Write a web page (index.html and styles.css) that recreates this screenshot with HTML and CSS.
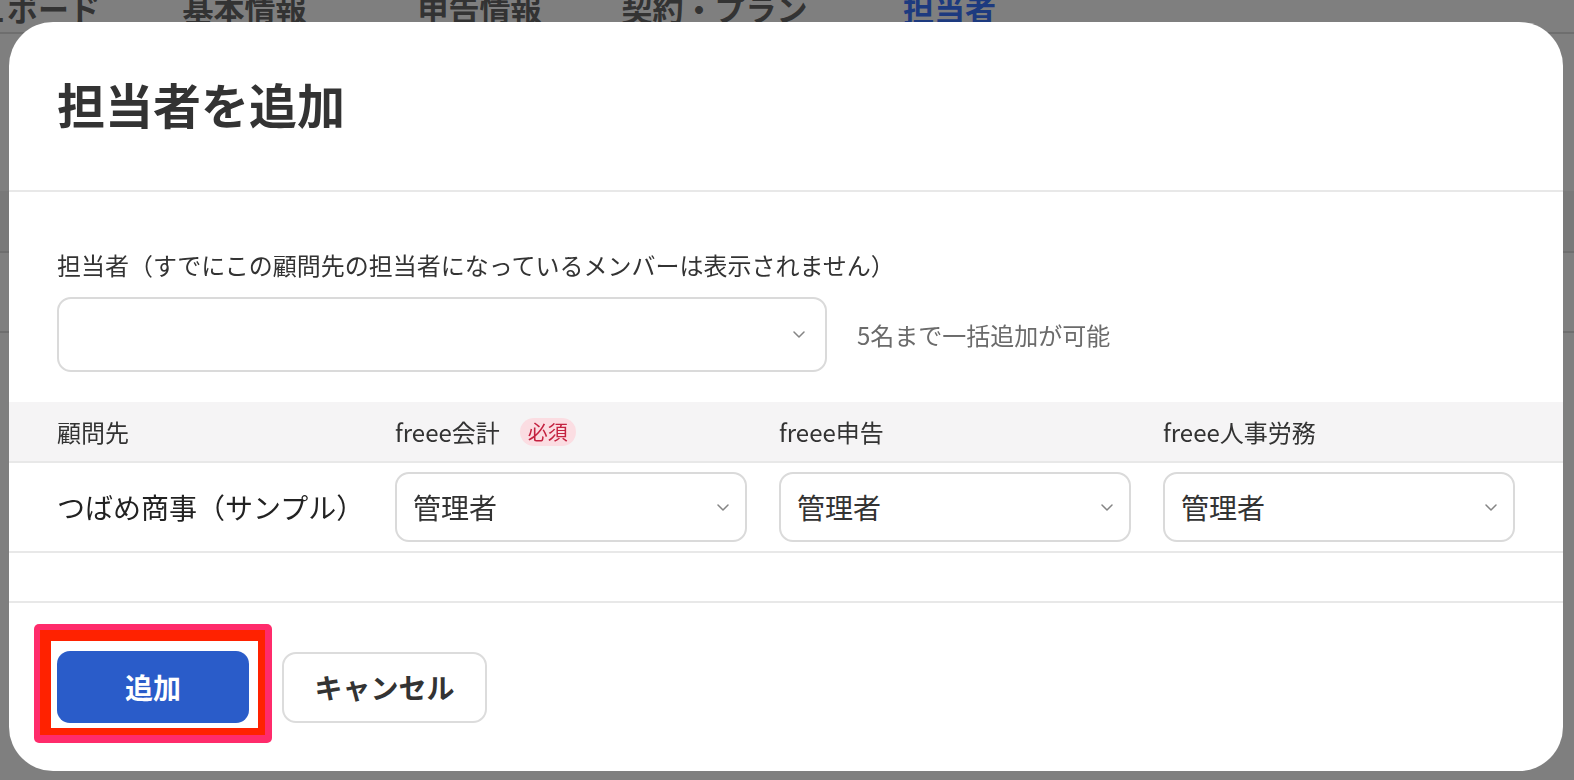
FILE: index.html
```html
<!DOCTYPE html>
<html lang="ja">
<head>
<meta charset="utf-8">
<title>担当者を追加</title>
<link rel="stylesheet" href="styles.css">
</head>
<body>
<div class="page">
  <nav class="tabs">
    <div class="tab-list">
      <div class="tab tab-first"><span>ダッシュボード</span></div>
      <div class="tab">基本情報</div>
      <div class="tab">申告情報</div>
      <div class="tab">契約・プラン</div>
      <div class="tab tab-active">担当者</div>
    </div>
  </nav>
  <div class="band band-a"></div>
  <div class="band band-b"></div>
  <div class="band band-c"></div>
</div>

<div class="overlay">
  <div class="modal">
    <header class="modal-header">
      <h1 class="modal-title">担当者を追加</h1>
    </header>

    <div class="modal-body">
      <div class="field">
        <div class="field-label">担当者（すでにこの顧問先の担当者になっているメンバーは表示されません）</div>
        <div class="field-row">
          <div class="select select-wide">
            <span class="select-value"></span>
            <svg class="chevron" viewBox="0 0 12 7" width="12" height="7"><polyline points="1,1 6,6 11,1"/></svg>
          </div>
          <span class="hint">5名まで一括追加が可能</span>
        </div>
      </div>

      <div class="table">
        <div class="row row-head">
          <div class="cell">顧問先</div>
          <div class="cell">freee会計<span class="badge">必須</span></div>
          <div class="cell">freee申告</div>
          <div class="cell">freee人事労務</div>
        </div>
        <div class="row row-body">
          <div class="cell client">つばめ商事（サンプル）</div>
          <div class="cell">
            <div class="select select-role">
              <span class="select-value">管理者</span>
              <svg class="chevron" viewBox="0 0 12 7" width="12" height="7"><polyline points="1,1 6,6 11,1"/></svg>
            </div>
          </div>
          <div class="cell">
            <div class="select select-role">
              <span class="select-value">管理者</span>
              <svg class="chevron" viewBox="0 0 12 7" width="12" height="7"><polyline points="1,1 6,6 11,1"/></svg>
            </div>
          </div>
          <div class="cell">
            <div class="select select-role">
              <span class="select-value">管理者</span>
              <svg class="chevron" viewBox="0 0 12 7" width="12" height="7"><polyline points="1,1 6,6 11,1"/></svg>
            </div>
          </div>
        </div>
      </div>
    </div>

    <footer class="modal-footer">
      <div class="primary-wrap">
        <div class="annotation"><div class="annotation-inner"></div></div>
        <button class="btn btn-primary">追加</button>
      </div>
      <button class="btn btn-secondary">キャンセル</button>
    </footer>
  </div>
</div>
</body>
</html>
```

FILE: styles.css
```css
* {
  box-sizing: border-box;
}

html, body {
  margin: 0;
  padding: 0;
  width: 1574px;
  height: 780px;
  overflow: hidden;
}

body {
  font-family: "Noto Sans CJK JP", "Noto Sans", sans-serif;
  color: #333;
  background: #fff;
}

/* underlying page */
.page {
  width: 1574px;
  height: 780px;
  background: #fff;
}

.tabs {
  height: 50px;
  border-bottom: 2px solid #dcdcdc;
}

.tab-list {
  display: flex;
  margin-top: -16px;
  margin-left: -108px;
}

.tab {
  flex: 0 0 235px;
  width: 235px;
  line-height: 48px;
  font-size: 31px;
  font-weight: 700;
  color: #666;
  text-align: center;
  white-space: nowrap;
}

.tab-first {
  display: flex;
  justify-content: flex-end;
  padding-right: 27px;
}

.tab-first span {
  flex: none;
}

.tab-active {
  color: #3b74ff;
}

.band-a {
  height: 157px;
}

.band-b {
  height: 62px;
  background: #f2f2f2;
  border-bottom: 2px solid #dcdcdc;
}

.band-c {
  height: 80px;
  border-bottom: 2px solid #dcdcdc;
}

/* overlay + modal */
.overlay {
  position: fixed;
  inset: 0;
  background: rgba(0, 0, 0, 0.5);
  display: flex;
  align-items: flex-start;
  padding: 22px 11px 9px 9px;
}

.modal {
  flex: 1;
  background: #fff;
  border-radius: 44px;
  overflow: hidden;
}

.modal-header {
  padding: 48px 48px 54px;
  border-bottom: 2px solid #e8e8e8;
}

.modal-title {
  margin: 0;
  font-size: 48px;
  line-height: 66px;
  font-weight: 700;
  color: #333;
}

.modal-body {
  padding: 55px 0 48px;
  border-bottom: 2px solid #e8e8e8;
}

.field {
  padding: 0 48px;
}

.field-label {
  font-size: 24px;
  line-height: 36px;
  color: #333;
  white-space: nowrap;
}

.field-row {
  display: flex;
  align-items: center;
  gap: 30px;
  margin-top: 14px;
}

.select {
  display: flex;
  align-items: center;
  justify-content: space-between;
  border: 2px solid #dadada;
  border-radius: 14px;
  background: #fff;
  padding: 0 16px 0 16px;
}

.select-wide {
  width: 770px;
  height: 75px;
  padding-right: 20px;
}

.select-role {
  width: 100%;
  height: 70px;
}

.select-value {
  font-size: 28px;
  color: #333;
}

.chevron {
  flex: none;
  fill: none;
  stroke: #858585;
  stroke-width: 1.5;
  stroke-linecap: round;
  stroke-linejoin: round;
}

.hint {
  font-size: 24px;
  color: #6b6b6b;
}

.table {
  margin-top: 30px;
}

.row {
  display: grid;
  grid-template-columns: 306px repeat(3, 1fr);
  column-gap: 32px;
  align-items: center;
  padding: 0 48px;
  border-bottom: 2px solid #e8e8e8;
}

.row-head {
  height: 61px;
  background: #f5f4f5;
}

.row-head .cell {
  display: flex;
  align-items: center;
  font-size: 24px;
  color: #333;
}

.badge {
  display: inline-block;
  margin-left: 20px;
  padding: 0 8px;
  height: 28px;
  line-height: 28px;
  border-radius: 14px;
  background: #fbdde2;
  color: #c4213f;
  font-size: 20px;
}

.row-body {
  height: 90px;
}

.client {
  font-size: 28px;
  color: #222;
  white-space: nowrap;
}

.modal-footer {
  display: flex;
  align-items: center;
  gap: 33px;
  padding: 48px;
}

.primary-wrap {
  position: relative;
}

.annotation {
  position: absolute;
  left: -23px;
  top: -27px;
  width: 238px;
  height: 119px;
  background: #ff2b6b;
  border-radius: 5px;
  padding: 6px 7px 8px 6px;
}

.annotation-inner {
  width: 100%;
  height: 100%;
  background: #fff;
  border-style: solid;
  border-color: #ff2200;
  border-width: 11px 7px 7px 11px;
}

.btn {
  position: relative;
  font-family: inherit;
  font-size: 28px;
  font-weight: 700;
  height: 72px;
  border-radius: 13px;
  cursor: pointer;
}

.btn-primary {
  width: 192px;
  background: #2a5cc9;
  color: #fff;
  border: none;
}

.btn-secondary {
  width: 205px;
  height: 71px;
  background: #fff;
  color: #333;
  border: 2px solid #dcdcdc;
  border-radius: 14px;
}
```
